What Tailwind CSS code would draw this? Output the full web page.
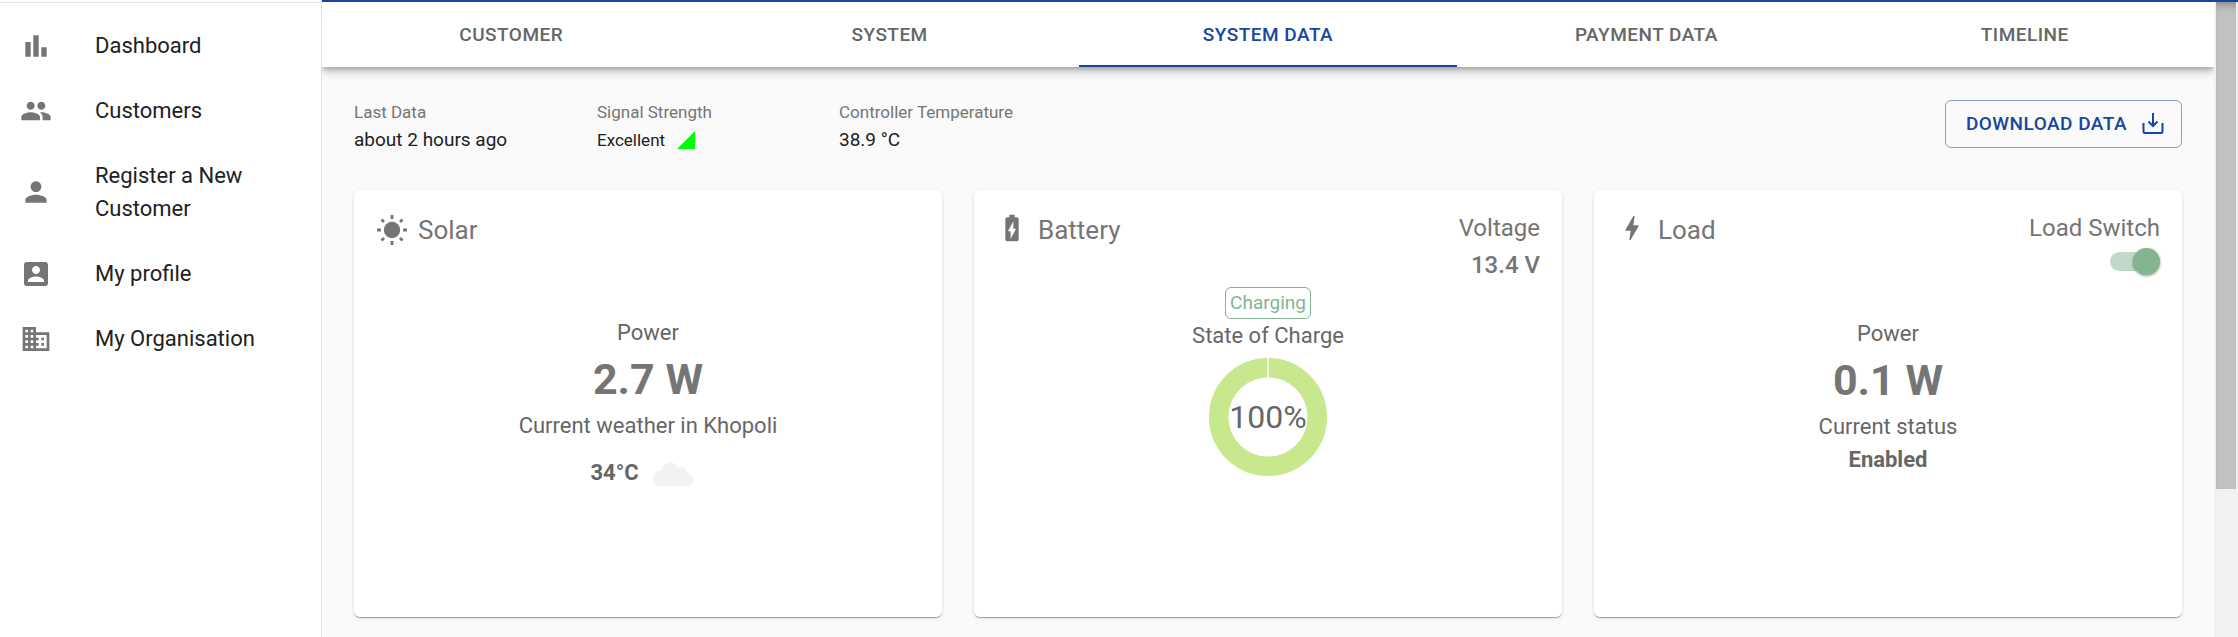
<!DOCTYPE html>
<html lang="en">
<head>
  <meta charset="UTF-8" />
  <meta name="viewport" content="width=device-width, initial-scale=1.0"/>
  <title>System Data</title>
  <script src="https://cdn.jsdelivr.net/npm/@tailwindcss/browser@4"></script>
</head>
<body class="bg-[#fafafa] font-['Roboto',sans-serif] text-[22px] leading-[33px] text-[#212121]">

<div class="flex h-screen overflow-hidden">

  <!-- Sidebar -->
  <nav class="w-[322px] shrink-0 border-r border-[#e0e0e0] bg-white pt-0.5">
    <ul class="border-t border-[#e0e0e0] pt-2.5">
      <li>
        <a href="#" class="flex items-center py-4 pl-5 pr-4">
          <span class="w-[75px] shrink-0 text-[#757575]"><svg class="size-8" viewBox="0 0 24 24" fill="currentColor"><path d="M4 9h4v11H4zm12 4h4v7h-4zm-6-9h4v16h-4z"/></svg></span>
          <span>Dashboard</span>
        </a>
      </li>
      <li>
        <a href="#" class="flex items-center py-4 pl-5 pr-4">
          <span class="w-[75px] shrink-0 text-[#757575]"><svg class="size-8" viewBox="0 0 24 24" fill="currentColor"><path d="M16 11c1.66 0 2.99-1.34 2.99-3S17.66 5 16 5c-1.66 0-3 1.34-3 3s1.34 3 3 3zm-8 0c1.66 0 2.99-1.34 2.99-3S9.66 5 8 5C6.34 5 5 6.34 5 8s1.34 3 3 3zm0 2c-2.33 0-7 1.17-7 3.5V19h14v-2.5c0-2.33-4.67-3.5-7-3.5zm8 0c-.29 0-.62.02-.97.05 1.16.84 1.97 1.97 1.97 3.45V19h6v-2.5c0-2.33-4.67-3.5-7-3.5z"/></svg></span>
          <span>Customers</span>
        </a>
      </li>
      <li>
        <a href="#" class="flex items-center py-4 pl-5 pr-4">
          <span class="w-[75px] shrink-0 text-[#757575]"><svg class="size-8" viewBox="0 0 24 24" fill="currentColor"><path d="M12 12c2.21 0 4-1.79 4-4s-1.79-4-4-4-4 1.79-4 4 1.79 4 4 4zm0 2c-2.67 0-8 1.34-8 4v2h16v-2c0-2.66-5.33-4-8-4z"/></svg></span>
          <span>Register a New Customer</span>
        </a>
      </li>
      <li>
        <a href="#" class="flex items-center py-4 pl-5 pr-4">
          <span class="w-[75px] shrink-0 text-[#757575]"><svg class="size-8" viewBox="0 0 24 24" fill="currentColor"><path d="M3 5v14c0 1.1.89 2 2 2h14c1.1 0 2-.9 2-2V5c0-1.1-.9-2-2-2H5c-1.11 0-2 .9-2 2zm12 4c0 1.66-1.34 3-3 3s-3-1.34-3-3 1.34-3 3-3 3 1.34 3 3zm-9 8c0-2 4-3.1 6-3.1s6 1.1 6 3.1v1H6v-1z"/></svg></span>
          <span>My profile</span>
        </a>
      </li>
      <li>
        <a href="#" class="flex items-center py-4 pl-5 pr-4">
          <span class="w-[75px] shrink-0 text-[#757575]"><svg class="size-8" viewBox="0 0 24 24" fill="currentColor"><path d="M12 7V3H2v18h20V7H12zM6 19H4v-2h2v2zm0-4H4v-2h2v2zm0-4H4V9h2v2zm0-4H4V5h2v2zm4 12H8v-2h2v2zm0-4H8v-2h2v2zm0-4H8V9h2v2zm0-4H8V5h2v2zm10 12h-8v-2h2v-2h-2v-2h2v-2h-2V9h8v10zm-2-8h-2v2h2v-2zm0 4h-2v2h2v-2z"/></svg></span>
          <span>My Organisation</span>
        </a>
      </li>
    </ul>
  </nav>

  <div class="flex grow flex-col border-t-2 border-[#1746a0]">
    <div class="flex min-h-0 grow">

      <main class="min-w-0 grow overflow-hidden">
        <!-- Tabs -->
        <div class="grid h-[65px] grid-cols-5 bg-white text-[19px] font-medium tracking-wide text-[#666] shadow-[0_3px_5px_-1px_rgba(0,0,0,0.2),0_5px_8px_rgba(0,0,0,0.14),0_1px_14px_rgba(0,0,0,0.12)]">
          <button class="border-b-2 border-transparent pt-0.5">CUSTOMER</button>
          <button class="border-b-2 border-transparent pt-0.5">SYSTEM</button>
          <button class="border-b-2 border-[#1746a0] pt-0.5 text-[#1746a0]">SYSTEM DATA</button>
          <button class="border-b-2 border-transparent pt-0.5">PAYMENT DATA</button>
          <button class="border-b-2 border-transparent pt-0.5">TIMELINE</button>
        </div>

        <div class="px-8 pt-[33px]">
          <!-- Readings -->
          <div class="flex items-start">
            <dl class="grid grid-cols-[243px_242px_242px] text-[19px] leading-7">
              <div>
                <dt class="text-[17px] leading-6 text-[#757575]">Last Data</dt>
                <dd class="mt-0.5">about 2 hours ago</dd>
              </div>
              <div>
                <dt class="text-[17px] leading-6 text-[#757575]">Signal Strength</dt>
                <dd class="mt-0.5 flex items-center gap-3 text-[17px]">Excellent
                  <svg class="size-[18px]" viewBox="0 0 18 18"><path d="M18 0v18H0z" fill="#0f0"/></svg>
                </dd>
              </div>
              <div>
                <dt class="text-[17px] leading-6 text-[#757575]">Controller Temperature</dt>
                <dd class="mt-0.5">38.9 °C</dd>
              </div>
            </dl>
            <button class="ml-auto flex h-12 items-center gap-3.5 rounded-md border border-[#1746a0]/50 pl-5 pr-4 pb-0.5 text-[19px] font-medium tracking-wide text-[#1746a0]">
              DOWNLOAD DATA
              <svg class="size-6" viewBox="0 0 24 24" fill="none" stroke="currentColor" stroke-width="2"><path d="M12 2v13M7.500 10.500l4.500 4.500 4.500-4.500M2.500 12v8.500a1.500 1.500 0 0 0 1.500 1.500h16a1.500 1.500 0 0 0 1.500-1.500V12"/></svg>
            </button>
          </div>

          <!-- Cards -->
          <div class="mt-9 grid grid-cols-3 gap-8 text-[#666]">
            <section class="h-[427px] rounded-md bg-white px-[22px] pt-5 shadow-[0_2px_1px_-1px_rgba(0,0,0,0.2),0_1px_1px_rgba(0,0,0,0.14),0_1px_4px_rgba(0,0,0,0.12)]">
              <div class="flex h-[106px] items-start text-[#757575]">
                <svg class="mt-1 size-8" viewBox="0 0 32 32" fill="none" stroke="currentColor" stroke-width="2.800"><circle cx="16" cy="16" r="8.200" fill="currentColor" stroke="none"/><path d="M16 1v4M16 27v4M1 16h4M27 16h4M5.500 5.500l2.500 2.500M24 24l2.500 2.500M5.500 26.500L8 24M24 8l2.500-2.500"/></svg>
                <h2 class="ml-2.5 mt-1 text-[26px]">Solar</h2>
              </div>
              <div class="flex flex-col items-center">
                <p>Power</p>
                <p class="text-[43px] font-bold leading-[60px] text-[#757575]">2.7 W</p>
                <p>Current weather in Khopoli</p>
                <p class="mt-3.5 flex items-center gap-3.5 pr-3 font-bold">34°C
                  <svg class="h-[26px] w-[41px]" viewBox="0 0 41 26" fill="#f2f2f0"><path d="M7.500 26a7.700 7.700 0 0 1 0-15.500h1A8.500 8.500 0 0 1 25 8a6.500 6.500 0 0 1 9.500 5.500A6.300 6.300 0 0 1 34.500 26z"/></svg>
                </p>
              </div>
            </section>

            <section class="h-[427px] rounded-md bg-white px-[22px] pt-5 shadow-[0_2px_1px_-1px_rgba(0,0,0,0.2),0_1px_1px_rgba(0,0,0,0.14),0_1px_4px_rgba(0,0,0,0.12)]">
              <div class="flex h-[77px] items-start text-[#757575]">
                <svg class="mt-0.5 size-8" viewBox="0 0 24 24" fill="currentColor"><path d="M15.670 4H14V2h-4v2H8.330C7.600 4 7 4.600 7 5.330v15.330C7 21.400 7.600 22 8.330 22h7.330c.74 0 1.340-.6 1.340-1.330V5.330C17 4.600 16.400 4 15.670 4zM11 20v-5.500H9L13 7v5.500h2L11 20z"/></svg>
                <h2 class="ml-2.5 mt-1 text-[26px]">Battery</h2>
                <div class="ml-auto text-right text-[24px] leading-[37px]">
                  <p>Voltage</p>
                  <p class="font-medium">13.4 V</p>
                </div>
              </div>
              <div class="flex flex-col items-center">
                <span class="rounded-md border border-[#83b591] px-1 text-[19px] leading-[30px] text-[#83b591]">Charging</span>
                <p>State of Charge</p>
                <div class="mt-1.5 grid size-[118px] place-items-center">
                  <svg class="col-start-1 row-start-1 size-[118px]" viewBox="0 0 118 118"><circle cx="59" cy="59" r="49.250" fill="none" stroke="#c8e88d" stroke-width="19.500"/><path d="M59 0v20" stroke="#fff" stroke-width="1.500"/></svg>
                  <span class="col-start-1 row-start-1 text-[32px]">100%</span>
                </div>
              </div>
            </section>

            <section class="h-[427px] rounded-md bg-white px-[22px] pt-5 shadow-[0_2px_1px_-1px_rgba(0,0,0,0.2),0_1px_1px_rgba(0,0,0,0.14),0_1px_4px_rgba(0,0,0,0.12)]">
              <div class="flex h-[107px] items-start text-[#757575]">
                <svg class="mt-0.5 size-8" viewBox="0 0 24 24" fill="currentColor"><path d="M11 21h-1l1-7H7.500c-.88 0-.33-.75-.31-.78C8.480 10.940 10.420 7.540 13.010 3h1l-1 7h3.510c.4 0 .62.190.4.660C12.970 17.550 11 21 11 21z"/></svg>
                <h2 class="ml-2.5 mt-1 text-[26px]">Load</h2>
                <label class="ml-auto flex flex-col items-end text-[24px] leading-[37px]">
                  Load Switch
                  <span class="relative flex h-7 items-center">
                    <input type="checkbox" checked class="h-[19px] w-[50px] appearance-none rounded-full bg-[#83b591]/50"/>
                    <span class="absolute right-0 size-[27px] rounded-full bg-[#83b591] shadow-[0_1px_3px_rgba(0,0,0,0.4)]"></span>
                  </span>
                </label>
              </div>
              <div class="flex flex-col items-center">
                <p>Power</p>
                <p class="text-[43px] font-bold leading-[60px] text-[#757575]">0.1 W</p>
                <p>Current status</p>
                <p class="font-bold">Enabled</p>
              </div>
            </section>
          </div>
        </div>
      </main>

      <!-- Scroll bar -->
      <div class="w-6 shrink-0 bg-[#f1f1f1] px-0.5">
        <div class="h-[487px] bg-[#c1c1c1] shadow-[inset_0_8px_8px_-6px_rgba(0,0,0,0.35)]"></div>
      </div>
    </div>
  </div>

</div>

</body>
</html>
